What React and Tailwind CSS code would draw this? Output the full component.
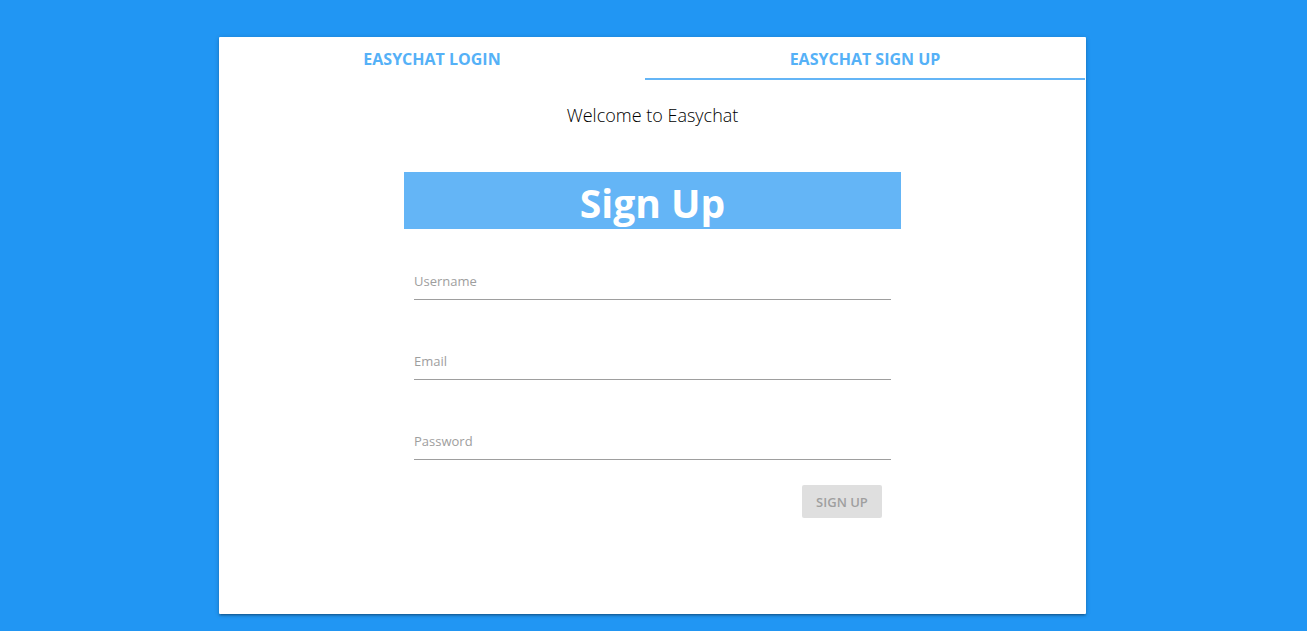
function Field({ id, label, type }) {
  return (
    <div className="flex h-20 flex-col pt-5">
      <input
        id={id}
        type={type}
        placeholder={label}
        aria-label={label}
        className="h-12 w-full border-b border-[#9e9e9e] bg-transparent pt-2.5 text-[13px] text-black outline-none placeholder:text-[#9e9e9e]"
      />
    </div>
  );
}

export default function App() {
  return (
    <div className="flex min-h-screen flex-col items-center bg-[#2196f3] pt-[37px] pr-4.5 pb-[17px] pl-4 font-['Open_Sans',sans-serif]">
      <main className="flex w-full max-w-[867px] grow flex-col rounded-[1px] bg-white shadow-[0_2px_2px_0_rgba(0,0,0,0.14),0_3px_1px_-2px_rgba(0,0,0,0.12),0_1px_5px_0_rgba(0,0,0,0.2)]">
        <nav className="flex h-[43px] pr-px text-base leading-6 font-bold text-[#55b1f7]">
          <a href="#login" className="flex w-[426px] items-center justify-center border-b-2 border-transparent pt-0.5">EASYCHAT LOGIN</a>
          <a href="#signup" className="flex grow items-center justify-center border-b-2 border-[#64b5f6] pt-0.5">EASYCHAT SIGN UP</a>
        </nav>
        <p className="mt-[23px] text-center text-lg leading-6 font-light text-black">Welcome to Easychat</p>
        <form className="mx-auto mt-[45px] w-full max-w-[497px]">
          <h1 className="h-[57px] bg-[#64b5f6] text-center text-[39px] leading-[62px] font-bold text-white">Sign Up</h1>
          <div className="px-2.5 pt-[3px]">
            <Field id="username" label="Username" type="text" />
            <Field id="email" label="Email" type="email" />
            <Field id="password" label="Password" type="password" />
            <div className="flex justify-end px-[9px] pt-[13px]">
              <button type="button" disabled className="h-[33px] w-20 rounded-xs bg-[#dfdfdf] pt-0.5 text-[13px] font-semibold text-[#9f9f9f]">SIGN UP</button>
            </div>
          </div>
        </form>
      </main>
    </div>
  );
}
